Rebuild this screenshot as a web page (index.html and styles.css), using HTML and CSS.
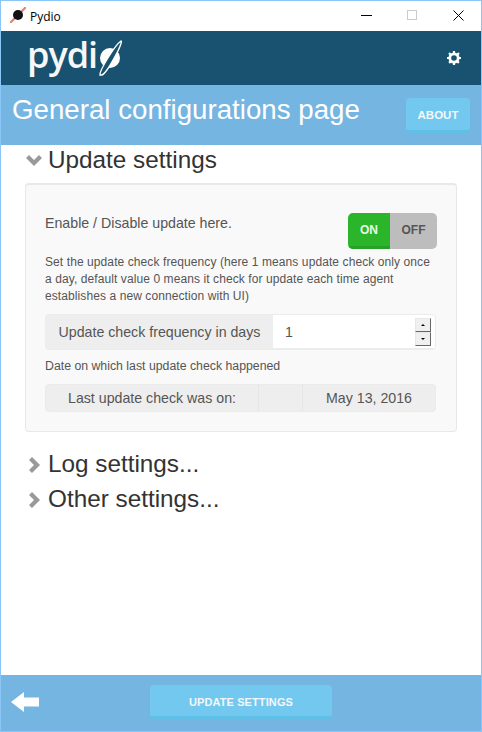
FILE: index.html
```html
<!DOCTYPE html>
<html lang="en">
<head>
    <meta charset="UTF-8">
    <meta name="viewport" content="width=device-width, initial-scale=1.0">
    <title>Pydio</title>
    <link rel="stylesheet" href="styles.css">
</head>
<body>

<div class="window">
    <div class="titlebar">
        <svg class="app-icon" width="16" height="16" viewBox="0 0 16 16">
            <path d="M1 15 L15 1" stroke="#f08070" stroke-width="2.4" stroke-linecap="round"/>
            <circle cx="8" cy="8" r="5" fill="#111"/>
        </svg>
        <span class="app-name">Pydio</span>
        <div class="win-buttons">
            <svg width="11" height="11" viewBox="0 0 11 11"><path d="M0 5.5H11" stroke="#000" stroke-width="1"/></svg>
            <svg width="11" height="11" viewBox="0 0 11 11"><rect x="0.5" y="0.5" width="9" height="9" fill="none" stroke="#ccc"/></svg>
            <svg width="11" height="11" viewBox="0 0 11 11"><path d="M0.5 0.5L10.5 10.5M10.5 0.5L0.5 10.5" stroke="#000" stroke-width="1"/></svg>
        </div>
    </div>

    <div class="navbar">
        <div class="logo">
            <span class="logo-text">pydi</span>
            <svg class="logo-planet" width="26" height="38" viewBox="0 0 26 38">
                <circle cx="12" cy="19" r="10" fill="#fff"/>
                <path d="M2 36 C1 32 17 6 23 2 C26 2 10 33 4 36 Z" fill="#185270"/>
                <path d="M2 36 C1 32 17 6 23 2 C26 2 10 33 4 36 Z" fill="none" stroke="#fff" stroke-width="1.4"/>
            </svg>
        </div>
        <svg class="gear" width="14" height="14" viewBox="0 0 14 14">
            <circle cx="7" cy="7" r="4.2" fill="none" stroke="#fff" stroke-width="2.8"/>
            <path d="M7 0V14M0 7H14M2 2L12 12M12 2L2 12" stroke="#fff" stroke-width="2.2" stroke-dasharray="2.4 9.2 2.4"/>
        </svg>
    </div>

    <div class="page-header">
        <h1>General configurations page</h1>
        <button class="btn btn-about">ABOUT</button>
    </div>

    <div class="content">
        <h2 class="section-title open">
            <svg width="16" height="11" viewBox="0 0 16 11"><path d="M0 3L3 0L8 5L13 0L16 3L8 11Z" fill="#999"/></svg>
            Update settings
        </h2>

        <div class="panel">
            <div class="switch-row">
                <span class="switch-label">Enable / Disable update here.</span>
                <div class="switch">
                    <span class="switch-on">ON</span>
                    <span class="switch-off">OFF</span>
                </div>
            </div>
            <p class="help">Set the update check frequency (here 1 means update check only once<br>a day, default value 0 means it check for update each time agent<br>establishes a new connection with UI)</p>
            <div class="input-group">
                <span class="addon">Update check frequency in days</span>
                <div class="number-field">
                    <span>1</span>
                    <div class="spinner">
                        <span class="spin-btn"><i class="arrow-up"></i></span>
                        <span class="spin-btn"><i class="arrow-down"></i></span>
                    </div>
                </div>
            </div>
            <p class="help help-date">Date on which last update check happened</p>
            <div class="date-group">
                <span class="date-label">Last update check was on:</span>
                <span class="date-gap"></span>
                <span class="date-value">May 13, 2016</span>
            </div>
        </div>

        <h2 class="section-title closed">
            <svg width="11" height="16" viewBox="0 0 11 16"><path d="M3 0L11 8L3 16L0 13L5 8L0 3Z" fill="#999"/></svg>
            Log settings...
        </h2>
        <h2 class="section-title closed">
            <svg width="11" height="16" viewBox="0 0 11 16"><path d="M3 0L11 8L3 16L0 13L5 8L0 3Z" fill="#999"/></svg>
            Other settings...
        </h2>
    </div>

    <div class="footer">
        <svg class="back" width="28" height="20" viewBox="0 0 28 20"><path d="M0 10L13 0V5.500H28V14.500H13V20Z" fill="#fff"/></svg>
        <button class="btn btn-update">UPDATE SETTINGS</button>
    </div>
</div>

</body>
</html>
```

FILE: styles.css
```css
* {
    box-sizing: border-box;
}
body {
    margin: 0;
    font-family: "Liberation Sans", Arial, sans-serif;
    color: #555;
    background: #fff;
}
.window {
    height: 732px;
    display: flex;
    flex-direction: column;
    border: 1px solid #8ac6f7;
}
.titlebar {
    height: 30px;
    flex: none;
    display: flex;
    align-items: center;
    padding-left: 9px;
    background: #fff;
}
.app-icon {
    margin-bottom: 2px;
}
.app-name {
    margin-left: 4px;
    font-family: "Open Sans", sans-serif;
    font-size: 12px;
    color: #000;
}
.win-buttons {
    margin-left: auto;
    margin-bottom: 2px;
    display: flex;
    gap: 35px;
    padding-right: 17px;
}
.navbar {
    height: 54px;
    flex: none;
    display: flex;
    align-items: center;
    justify-content: space-between;
    padding: 0 20px 0 26px;
    background: #185270;
}
.logo {
    display: flex;
    align-items: center;
}
.logo-text {
    font-family: "Open Sans", sans-serif;
    font-size: 36px;
    font-weight: 600;
    line-height: 40px;
    color: #f7f7f7;
    letter-spacing: -1px;
    margin-top: -6px;
}
.logo-planet {
    margin-left: 1px;
}
.page-header {
    height: 60px;
    flex: none;
    display: flex;
    align-items: center;
    justify-content: space-between;
    padding: 0 11px;
    background: #75b5e2;
}
.page-header h1 {
    margin: 0 0 10px;
    font-size: 27.700px;
    font-weight: normal;
    color: #fff;
}
.btn {
    padding: 2px 0 0;
    border: none;
    border-bottom: 3px solid #5fbfe6;
    border-radius: 4px;
    background: #72c8ee;
    color: #f2f8fc;
    font-family: "Liberation Sans", Arial, sans-serif;
    font-size: 11.500px;
    font-weight: bold;
}
.btn-about {
    width: 64px;
    height: 35px;
    margin-top: 1px;
}
.content {
    flex: 1;
    padding: 0 24px;
}
.section-title {
    margin: 0;
    height: 35px;
    display: flex;
    align-items: center;
    gap: 6px;
    font-size: 24.300px;
    font-weight: normal;
    color: #333;
}
.section-title svg {
    margin-left: 1px;
    margin-top: 2px;
}
.section-title.open {
    margin-top: -3px;
}
.section-title.closed {
    gap: 8px;
}
.section-title.closed svg {
    margin-left: 4px;
}
.panel {
    height: 249px;
    margin: 6px 0 14px;
    padding: 28px 20px 0 19px;
    background: #f9f9f9;
    border: 1px solid #e8e8e8;
    border-top-width: 2px;
    border-radius: 4px;
}
.switch-row {
    height: 36px;
    display: flex;
    justify-content: space-between;
    font-size: 14.200px;
}
.switch-label {
    padding-top: 2px;
}
.switch {
    width: 89px;
    height: 36px;
    margin-right: -1px;
    display: flex;
    border-radius: 5px;
    overflow: hidden;
    font-size: 12px;
    font-weight: bold;
    line-height: 34px;
    text-align: center;
}
.switch-on {
    width: 42px;
    background: #2ab52a;
    border-bottom: 3px solid #26a226;
    color: #e6fbe6;
}
.switch-off {
    flex: 1;
    background: #bdbdbd;
    color: #555;
}
.help {
    margin: 5px 0 0;
    font-size: 12px;
    line-height: 17px;
    letter-spacing: 0.09px;
}
.input-group {
    height: 36px;
    margin-top: 9px;
    display: flex;
    background: #eee;
    border: 1px solid #ececec;
    border-radius: 4px;
    overflow: hidden;
    font-size: 14.200px;
}
.addon {
    width: 227px;
    text-align: center;
    line-height: 35px;
}
.number-field {
    flex: 1;
    display: flex;
    justify-content: space-between;
    align-items: center;
    padding: 0 4px 0 12px;
    background: #fff;
    border-bottom: 1px solid #ececec;
}
.spinner {
    display: flex;
    flex-direction: column;
    width: 16px;
    height: 28px;
}
.spin-btn {
    flex: 1;
    display: flex;
    align-items: center;
    justify-content: center;
    background: #f0f0f0;
    border: 1px solid;
    border-color: #e8e8e8 #666 #666 #e8e8e8;
}
.spin-btn i {
    width: 0;
    height: 0;
    border-left: 2px solid transparent;
    border-right: 2px solid transparent;
}
.arrow-up {
    border-bottom: 2px solid #000;
}
.arrow-down {
    border-top: 2px solid #000;
}
.help-date {
    margin-top: 8px;
    font-size: 12.300px;
    letter-spacing: 0;
}
.date-group {
    height: 28px;
    margin-top: 9px;
    display: flex;
    background: #eee;
    border: 1px solid #ebebeb;
    border-radius: 4px;
    font-size: 14.200px;
    line-height: 27px;
    text-align: center;
}
.date-label {
    width: 212px;
}
.date-gap {
    width: 45px;
    border-left: 1px solid #e6e6e6;
    border-right: 1px solid #e6e6e6;
}
.date-value {
    flex: 1;
}
.footer {
    height: 56px;
    flex: none;
    display: flex;
    align-items: flex-start;
    padding: 10px 0 0 10px;
    background: #75b5e2;
}
.back {
    flex: none;
    margin-top: 7px;
}
.btn-update {
    width: 182px;
    height: 34px;
    margin-left: 111px;
    font-size: 11px;
    letter-spacing: 0.1px;
}
```
